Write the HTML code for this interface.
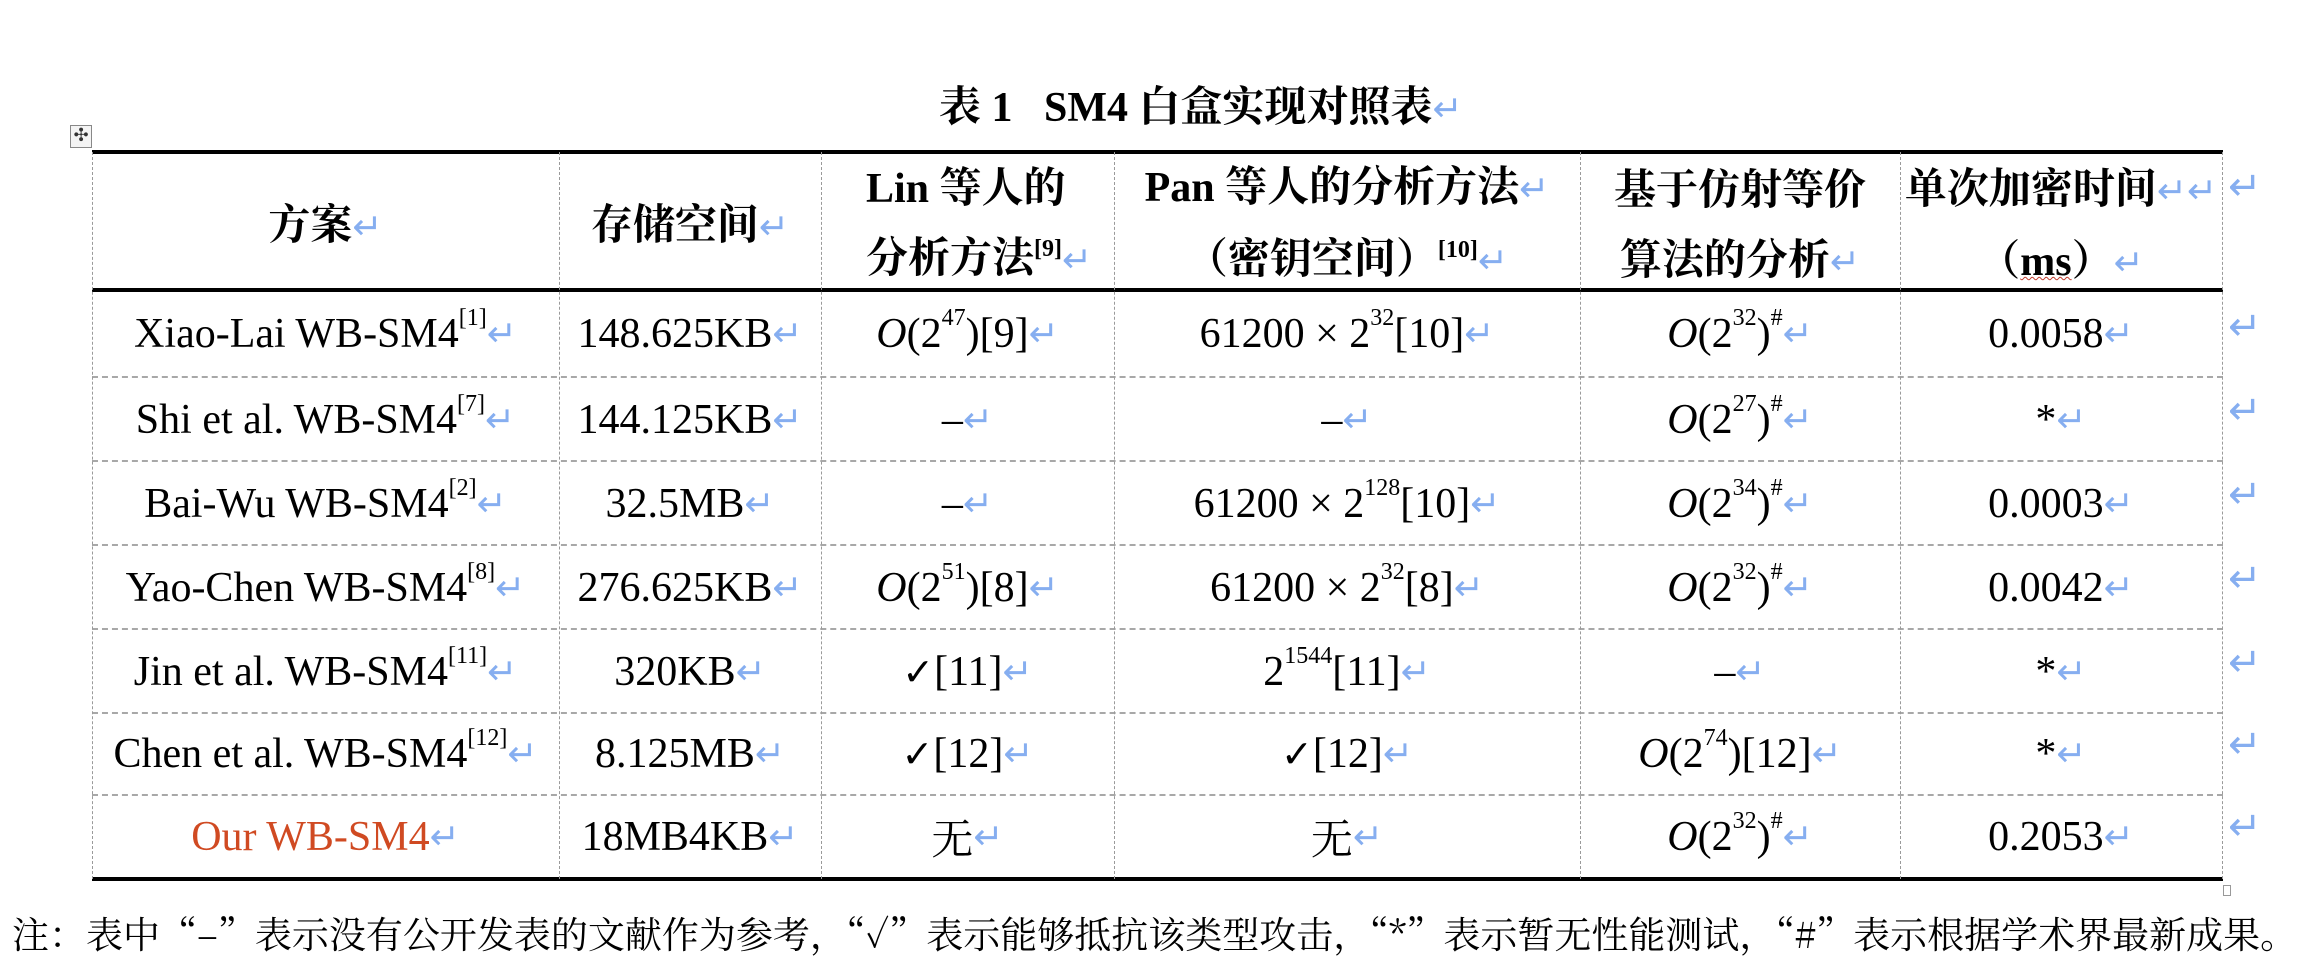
<!DOCTYPE html>
<html><head><meta charset="utf-8">
<style>
html,body{margin:0;padding:0;background:#fff;}
body{width:2298px;height:968px;position:relative;overflow:hidden;font-family:"Liberation Serif","Noto Serif CJK SC",serif;color:#000;}
.a{position:absolute;}
.r{color:#86aef0;font-family:"DejaVu Sans",sans-serif;font-size:36px;font-weight:normal;}
.c{position:absolute;display:flex;align-items:center;justify-content:center;font-size:42px;white-space:nowrap;}
.h{font-weight:bold;flex-direction:column;line-height:70px;padding-top:12px;box-sizing:border-box;}
sup{font-size:24px;vertical-align:0;position:relative;top:-16px;}
.i{font-style:italic;}
.ck{font-family:"DejaVu Sans",sans-serif;font-weight:bold;font-size:38px;}
.hl{position:absolute;left:92px;width:2131px;}
.vl{position:absolute;top:152px;height:727px;border-left:1.5px dashed #9a9a9a;}
</style></head><body>
<div class="a" style="left:939px;top:74px;font-size:42px;font-weight:bold;white-space:nowrap;">表 1&nbsp;&nbsp;&nbsp;SM4 白盒实现对照表<span class="r">↵</span></div>
<div class="a" style="left:70px;top:125px;width:20px;height:21px;border:1.5px solid #888;background:#f4f4f4;font-size:18px;line-height:20px;text-align:center;color:#333;font-family:'DejaVu Sans',sans-serif;">✣</div>

<div class="hl" style="top:150px;height:4px;background:#000;"></div>
<div class="hl" style="top:288px;height:4px;background:#000;"></div>
<div class="hl" style="top:376px;border-top:2px dashed #a8a8a8;"></div>
<div class="hl" style="top:460px;border-top:2px dashed #a8a8a8;"></div>
<div class="hl" style="top:544px;border-top:2px dashed #a8a8a8;"></div>
<div class="hl" style="top:628px;border-top:2px dashed #a8a8a8;"></div>
<div class="hl" style="top:712px;border-top:2px dashed #a8a8a8;"></div>
<div class="hl" style="top:794px;border-top:2px dashed #a8a8a8;"></div>
<div class="hl" style="top:877px;height:4px;background:#000;"></div>

<div class="vl" style="left:92px"></div>
<div class="vl" style="left:559px"></div>
<div class="vl" style="left:821px"></div>
<div class="vl" style="left:1114px"></div>
<div class="vl" style="left:1580px"></div>
<div class="vl" style="left:1900px"></div>
<div class="vl" style="left:2222px"></div>
<div class="a" style="left:2223px;top:885px;width:6px;height:9px;border:1.5px solid #999;"></div>

<!-- header -->
<div class="c h" style="left:92px;width:467px;top:154px;height:134px;"><div>方案<span class="r">↵</span></div></div>
<div class="c h" style="left:559px;width:262px;top:154px;height:134px;"><div>存储空间<span class="r">↵</span></div></div>
<div class="c h" style="left:821px;width:293px;top:154px;height:134px;align-items:flex-start;padding-left:45px;"><div>Lin 等人的</div><div>分析方法<sup>[9]</sup><span class="r">↵</span></div></div>
<div class="c h" style="left:1114px;width:466px;top:154px;height:134px;"><div>Pan 等人的分析方法<span class="r">↵</span></div><div>（密钥空间）<sup>[10]</sup><span class="r">↵</span></div></div>
<div class="c h" style="left:1580px;width:320px;top:154px;height:134px;"><div>基于仿射等价</div><div>算法的分析<span class="r">↵</span></div></div>
<div class="c h" style="left:1900px;width:322px;top:154px;height:134px;"><div>单次加密时间<span class="r">↵↵</span></div><div>（<span style="text-decoration:underline wavy #c0392b;text-decoration-thickness:1px;">ms</span>）<span class="r">↵</span></div></div>

<!-- rows -->
<div class="c" style="left:92px;width:467px;top:292px;height:84px;">Xiao-Lai WB-SM4<sup>[1]</sup><span class="r">↵</span></div>
<div class="c" style="left:559px;width:262px;top:292px;height:84px;">148.625KB<span class="r">↵</span></div>
<div class="c" style="left:821px;width:293px;top:292px;height:84px;"><span class="i">O</span>(2<sup>47</sup>)[9]<span class="r">↵</span></div>
<div class="c" style="left:1114px;width:466px;top:292px;height:84px;">61200 × 2<sup>32</sup>[10]<span class="r">↵</span></div>
<div class="c" style="left:1580px;width:320px;top:292px;height:84px;"><span class="i">O</span>(2<sup>32</sup>)<sup>#</sup><span class="r">↵</span></div>
<div class="c" style="left:1900px;width:322px;top:292px;height:84px;">0.0058<span class="r">↵</span></div>

<div class="c" style="left:92px;width:467px;top:378px;height:84px;">Shi et al. WB-SM4<sup>[7]</sup><span class="r">↵</span></div>
<div class="c" style="left:559px;width:262px;top:378px;height:84px;">144.125KB<span class="r">↵</span></div>
<div class="c" style="left:821px;width:293px;top:378px;height:84px;">–<span class="r">↵</span></div>
<div class="c" style="left:1114px;width:466px;top:378px;height:84px;">–<span class="r">↵</span></div>
<div class="c" style="left:1580px;width:320px;top:378px;height:84px;"><span class="i">O</span>(2<sup>27</sup>)<sup>#</sup><span class="r">↵</span></div>
<div class="c" style="left:1900px;width:322px;top:378px;height:84px;">*<span class="r">↵</span></div>

<div class="c" style="left:92px;width:467px;top:462px;height:84px;">Bai-Wu WB-SM4<sup>[2]</sup><span class="r">↵</span></div>
<div class="c" style="left:559px;width:262px;top:462px;height:84px;">32.5MB<span class="r">↵</span></div>
<div class="c" style="left:821px;width:293px;top:462px;height:84px;">–<span class="r">↵</span></div>
<div class="c" style="left:1114px;width:466px;top:462px;height:84px;">61200 × 2<sup>128</sup>[10]<span class="r">↵</span></div>
<div class="c" style="left:1580px;width:320px;top:462px;height:84px;"><span class="i">O</span>(2<sup>34</sup>)<sup>#</sup><span class="r">↵</span></div>
<div class="c" style="left:1900px;width:322px;top:462px;height:84px;">0.0003<span class="r">↵</span></div>

<div class="c" style="left:92px;width:467px;top:546px;height:84px;">Yao-Chen WB-SM4<sup>[8]</sup><span class="r">↵</span></div>
<div class="c" style="left:559px;width:262px;top:546px;height:84px;">276.625KB<span class="r">↵</span></div>
<div class="c" style="left:821px;width:293px;top:546px;height:84px;"><span class="i">O</span>(2<sup>51</sup>)[8]<span class="r">↵</span></div>
<div class="c" style="left:1114px;width:466px;top:546px;height:84px;">61200 × 2<sup>32</sup>[8]<span class="r">↵</span></div>
<div class="c" style="left:1580px;width:320px;top:546px;height:84px;"><span class="i">O</span>(2<sup>32</sup>)<sup>#</sup><span class="r">↵</span></div>
<div class="c" style="left:1900px;width:322px;top:546px;height:84px;">0.0042<span class="r">↵</span></div>

<div class="c" style="left:92px;width:467px;top:630px;height:84px;">Jin et al. WB-SM4<sup>[11]</sup><span class="r">↵</span></div>
<div class="c" style="left:559px;width:262px;top:630px;height:84px;">320KB<span class="r">↵</span></div>
<div class="c" style="left:821px;width:293px;top:630px;height:84px;"><span class="ck">✓</span>[11]<span class="r">↵</span></div>
<div class="c" style="left:1114px;width:466px;top:630px;height:84px;">2<sup>1544</sup>[11]<span class="r">↵</span></div>
<div class="c" style="left:1580px;width:320px;top:630px;height:84px;">–<span class="r">↵</span></div>
<div class="c" style="left:1900px;width:322px;top:630px;height:84px;">*<span class="r">↵</span></div>

<div class="c" style="left:92px;width:467px;top:713px;height:82px;">Chen et al. WB-SM4<sup>[12]</sup><span class="r">↵</span></div>
<div class="c" style="left:559px;width:262px;top:713px;height:82px;">8.125MB<span class="r">↵</span></div>
<div class="c" style="left:821px;width:293px;top:713px;height:82px;"><span class="ck">✓</span>[12]<span class="r">↵</span></div>
<div class="c" style="left:1114px;width:466px;top:713px;height:82px;"><span class="ck">✓</span>[12]<span class="r">↵</span></div>
<div class="c" style="left:1580px;width:320px;top:713px;height:82px;"><span class="i">O</span>(2<sup>74</sup>)[12]<span class="r">↵</span></div>
<div class="c" style="left:1900px;width:322px;top:713px;height:82px;">*<span class="r">↵</span></div>

<div class="c" style="left:92px;width:467px;top:796px;height:82px;color:#d04a22;">Our WB-SM4<span class="r">↵</span></div>
<div class="c" style="left:559px;width:262px;top:796px;height:82px;">18MB4KB<span class="r">↵</span></div>
<div class="c" style="left:821px;width:293px;top:796px;height:82px;">无<span class="r">↵</span></div>
<div class="c" style="left:1114px;width:466px;top:796px;height:82px;">无<span class="r">↵</span></div>
<div class="c" style="left:1580px;width:320px;top:796px;height:82px;"><span class="i">O</span>(2<sup>32</sup>)<sup>#</sup><span class="r">↵</span></div>
<div class="c" style="left:1900px;width:322px;top:796px;height:82px;">0.2053<span class="r">↵</span></div>

<!-- right margin marks -->
<div class="a r" style="left:2228px;top:164px;font-size:40px;">↵</div>
<div class="a r" style="left:2228px;top:304px;font-size:40px;">↵</div>
<div class="a r" style="left:2228px;top:388px;font-size:40px;">↵</div>
<div class="a r" style="left:2228px;top:472px;font-size:40px;">↵</div>
<div class="a r" style="left:2228px;top:556px;font-size:40px;">↵</div>
<div class="a r" style="left:2228px;top:640px;font-size:40px;">↵</div>
<div class="a r" style="left:2228px;top:722px;font-size:40px;">↵</div>
<div class="a r" style="left:2228px;top:804px;font-size:40px;">↵</div>

<div class="a" style="left:12px;top:905px;font-size:37px;white-space:nowrap;font-family:'Noto Serif CJK SC','Liberation Serif',serif;">注：表中“–”表示没有公开发表的文献作为参考，“✓”表示能够抵抗该类型攻击，“*”表示暂无性能测试，“#”表示根据学术界最新成果。</div>
</body></html>
